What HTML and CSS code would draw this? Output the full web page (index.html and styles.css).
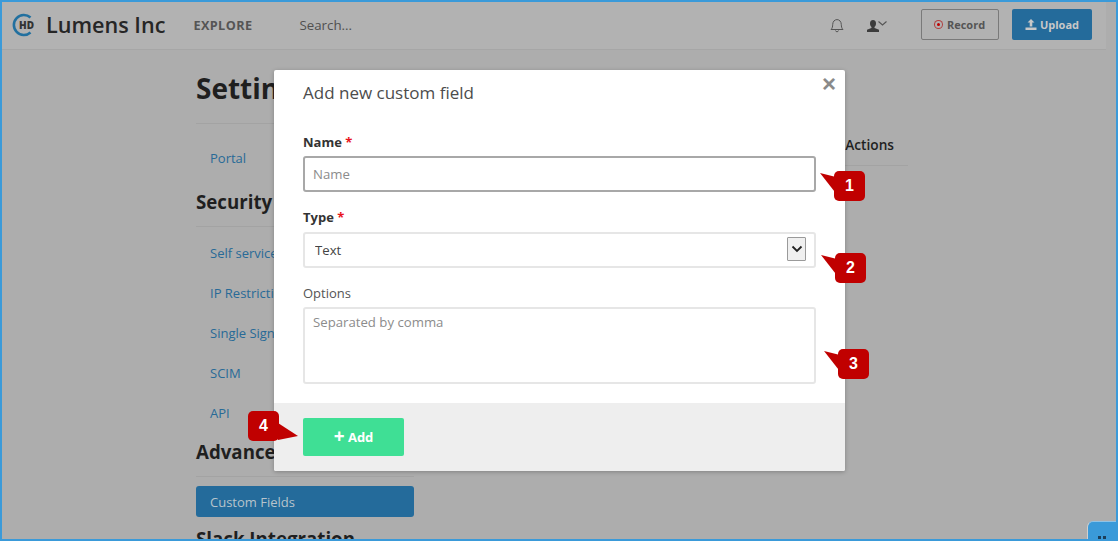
FILE: index.html
```html
<!DOCTYPE html>
<html lang="en">
<head>
    <meta charset="UTF-8">
    <meta name="viewport" content="width=device-width, initial-scale=1.0">
    <title>Settings - Custom Fields</title>
    <link rel="stylesheet" href="styles.css">
</head>
<body>
    <div class="frame">
        <!-- Header content -->
        <header class="topbar">
            <svg class="logo" width="24" height="24" viewBox="0 0 24 24">
                <path d="M19.5 4.5 A10 10 0 1 0 19.5 19.5" fill="none" stroke="#22709f" stroke-width="2.6"/>
                <text x="8" y="16" class="logo-text">HD</text>
            </svg>
            <span class="brand">Lumens Inc</span>
            <a class="explore">EXPLORE</a>
            <span class="search">Search...</span>
            <svg class="bell" width="14" height="15" viewBox="0 0 14 15">
                <path d="M1 11.5 C2.5 10 2.6 8.5 2.7 6.5 C2.8 3.5 4.6 1.6 7 1.6 C9.4 1.6 11.2 3.5 11.3 6.5 C11.4 8.5 11.5 10 13 11.5 Z M5.5 12.5 C5.7 14.2 8.3 14.2 8.5 12.5" fill="none" stroke="#555" stroke-width="1"/>
            </svg>
            <svg class="user" width="20" height="12" viewBox="0 0 20 12">
                <path d="M6 0 C8 0 9 1.5 9 3.4 C9 5 8.2 6.4 7.4 7 L7.6 8 L12 9.8 L12 12 L0 12 L0 9.8 L4.4 8 L4.6 7 C3.8 6.4 3 5 3 3.4 C3 1.5 4 0 6 0 Z" fill="#3c3c3c"/>
                <path d="M11.5 1.5 L15.5 5 L19.5 1.5" fill="none" stroke="#555" stroke-width="1.1"/>
            </svg>
            <button class="btn-record"><span class="record-dot"></span>Record</button>
            <button class="btn-upload">
                <svg width="12" height="11" viewBox="0 0 12 11">
                    <path d="M6 0 L9.5 3.6 L7.3 3.6 L7.3 7.4 L4.7 7.4 L4.7 3.6 L2.5 3.6 Z M0.5 8.4 L11.5 8.4 L11.5 11 L0.5 11 Z" fill="#c8c8c8"/>
                </svg>
                Upload
            </button>
        </header>

        <!-- Page behind the dialog -->
        <div class="page">
            <aside class="sidebar">
                <h2 class="page-title">Settings</h2>
                <ul class="side-list side-list-first">
                    <li>Portal</li>
                </ul>
                <h3 class="side-title side-title-rule title-security">Security</h3>
                <ul class="side-list side-list-security">
                    <li>Self service</li>
                    <li>IP Restrictions</li>
                    <li>Single Sign On</li>
                    <li>SCIM</li>
                    <li>API</li>
                </ul>
                <h3 class="side-title side-title-rule title-advanced">Advanced</h3>
                <div class="side-active">Custom Fields</div>
                <h3 class="side-title side-title-last">Slack Integration</h3>
            </aside>
            <div class="fields-table">
                <div class="fields-head">Actions</div>
            </div>
        </div>

        <div class="chat-tab"><span></span><span></span></div>

        <!-- Add custom field dialog -->
        <section class="modal">
            <div class="modal-body">
                <h4 class="modal-title">Add new custom field</h4>
                <span class="modal-close">&times;</span>

                <label class="field-label field-label-bold">Name <em>*</em></label>
                <input class="field-input field-name" placeholder="Name">

                <label class="field-label field-label-bold label-type">Type <em>*</em></label>
                <div class="select-wrap">
                    <select class="field-input field-select">
                        <option>Text</option>
                    </select>
                    <span class="select-arrow">
                        <svg width="12" height="8" viewBox="0 0 12 8">
                            <path d="M1.5 1.5 L6 6 L10.5 1.5" fill="none" stroke="#222" stroke-width="1.8"/>
                        </svg>
                    </span>
                </div>

                <label class="field-label label-options">Options</label>
                <textarea class="field-input field-options" placeholder="Separated by comma"></textarea>
            </div>
            <div class="modal-footer">
                <button class="btn-add"><span class="plus">+</span> Add</button>
            </div>
        </section>

        <!-- Numbered callouts -->
        <div class="callout callout-1">1</div>
        <div class="callout callout-2">2</div>
        <div class="callout callout-3">3</div>
        <div class="callout callout-4">4</div>
    </div>
</body>
</html>
```

FILE: styles.css
```css
/* Page frame */
html, body {
    margin: 0;
    padding: 0;
}

body {
    font-family: "Open Sans", Arial, sans-serif;
    color: #222;
    background-color: #adadad;
}

.frame {
    position: relative;
    width: 1118px;
    height: 541px;
    box-sizing: border-box;
    border: 2px solid #3a9ad9;
    overflow: hidden;
    background-color: #adadad;
}

/* Header styles */
.topbar {
    display: flex;
    align-items: center;
    width: 1104px;
    height: 48px;
    box-sizing: border-box;
    padding-bottom: 2px;
    background-color: #b2b2b2;
    border-bottom: 1px solid #a6a6a6;
}

.logo {
    margin-left: 9px;
}

.logo-text {
    font-family: "Open Sans", Arial, sans-serif;
    font-size: 10px;
    font-weight: 800;
    fill: #333;
}

.brand {
    margin-left: 11px;
    font-size: 21.6px;
    font-weight: 600;
    color: #262626;
}

.explore {
    margin-left: 28px;
    font-size: 12.7px;
    font-weight: 700;
    letter-spacing: 0.4px;
    color: #555;
}

.search {
    margin-left: 47px;
    font-size: 13.3px;
    color: #505050;
}

.bell {
    margin-left: auto;
    margin-top: 2px;
}

.user {
    margin-left: 23px;
    margin-top: 2px;
}

.btn-record {
    display: flex;
    align-items: center;
    justify-content: center;
    width: 78px;
    height: 31px;
    margin-left: 34px;
    padding: 0;
    font-family: inherit;
    font-size: 11px;
    font-weight: 700;
    color: #555;
    background: none;
    border: 1px solid #7a7a7a;
    border-radius: 2px;
}

.record-dot {
    width: 3px;
    height: 3px;
    margin-right: 5px;
    background-color: #c00000;
    border: 2px solid #b2b2b2;
    border-radius: 50%;
    box-shadow: 0 0 0 1px #b04040;
}

.btn-upload {
    display: flex;
    align-items: center;
    justify-content: center;
    gap: 3px;
    width: 80px;
    height: 31px;
    margin-left: 13px;
    margin-right: 14px;
    padding: 0;
    font-family: inherit;
    font-size: 11px;
    font-weight: 700;
    color: #c8c8c8;
    background-color: #246b9b;
    border: none;
    border-radius: 2px;
}

/* Page behind the dialog */
.page {
    display: flex;
    padding-left: 194px;
}

.sidebar {
    width: 218px;
    flex-shrink: 0;
}

.page-title {
    margin: 20px 0 0;
    padding-bottom: 17px;
    font-size: 28px;
    line-height: 36px;
    font-weight: 700;
    color: #1f1f1f;
    border-bottom: 1px solid #a3a3a3;
}

.side-list {
    list-style-type: none;
    margin: 0;
    padding: 0 0 0 14px;
    font-size: 13px;
    color: #286a97;
}

.side-list li {
    height: 40px;
    line-height: 40px;
    white-space: nowrap;
}

.side-list-first {
    margin-top: 14px;
}

.side-list-security {
    margin-top: 6px;
}

.side-title {
    margin: 0;
    font-size: 18.7px;
    line-height: 28px;
    font-weight: 700;
    color: #1f1f1f;
    white-space: nowrap;
}

.side-title-rule {
    padding-bottom: 10px;
    border-bottom: 1px solid #a3a3a3;
}

.title-security {
    margin-top: 10px;
}

.title-advanced {
    margin-top: 5px;
}

.side-active {
    height: 31px;
    margin-top: 9px;
    padding-left: 14px;
    font-size: 13px;
    line-height: 32px;
    color: #b8c4cc;
    background-color: #246b9b;
    border-radius: 3px;
}

.side-title-last {
    margin-top: 8px;
}

.fields-table {
    width: 480px;
    margin-top: 81px;
    margin-left: 14px;
}

.fields-head {
    height: 34px;
    padding-right: 14px;
    font-size: 13.7px;
    font-weight: 600;
    line-height: 28px;
    text-align: right;
    color: #1f1f1f;
    border-bottom: 1px solid #a3a3a3;
}

/* Chat tab in the corner */
.chat-tab {
    position: absolute;
    right: 0;
    bottom: 0;
    display: flex;
    align-items: flex-end;
    justify-content: center;
    gap: 2px;
    width: 28px;
    height: 17px;
    background-color: #3a9ad9;
    border-top: 1px solid #8fc3e6;
    border-left: 1px solid #d0d0d0;
    border-top-left-radius: 6px;
}

.chat-tab span {
    width: 3px;
    height: 3px;
    background-color: #1c3f5a;
}

/* Dialog */
.modal {
    position: absolute;
    left: 272px;
    top: 68px;
    width: 571px;
    height: 401px;
    background-color: #fff;
    border-radius: 2px;
    box-shadow: 0 1px 4px rgba(0, 0, 0, 0.25);
}

.modal-body {
    position: relative;
    height: 333px;
    padding-left: 29px;
    box-sizing: border-box;
}

.modal-title {
    margin: 0;
    padding-top: 11px;
    font-size: 17px;
    line-height: 24px;
    font-weight: 400;
    color: #4c4c4c;
}

.modal-close {
    position: absolute;
    right: 9px;
    top: 2px;
    font-family: "Liberation Sans", Arial, sans-serif;
    font-size: 24px;
    line-height: 24px;
    font-weight: 700;
    color: #8a8a8a;
}

.field-label {
    display: block;
    font-size: 13px;
    line-height: 18px;
    color: #555;
}

.field-label-bold {
    margin-top: 28px;
    font-weight: 700;
    color: #333;
}

.field-label em {
    font-style: normal;
    color: #e8141c;
}

.label-type {
    margin-top: 16px;
}

.label-options {
    margin-top: 16px;
}

.field-input {
    display: block;
    width: 513px;
    box-sizing: border-box;
    margin: 6px 0 0;
    padding: 0 0 0 8px;
    font-family: inherit;
    font-size: 13.2px;
    color: #444;
    background-color: #fff;
    border: 2px solid #e6e6e6;
    border-radius: 3px;
    outline: none;
}

.field-input::placeholder {
    color: #8c8c8c;
    opacity: 1;
}

.field-name {
    height: 36px;
    margin-top: 5px;
    border-color: #a8a8a8;
}

.select-wrap {
    position: relative;
    width: 513px;
}

.field-select {
    height: 36px;
    padding-left: 10px;
    padding-bottom: 1px;
    appearance: none;
}

.select-arrow {
    position: absolute;
    right: 10px;
    top: 5px;
    display: flex;
    align-items: center;
    justify-content: center;
    width: 17px;
    height: 22px;
    background-color: #f0f0f0;
    border: 1px solid #9a9a9a;
    border-radius: 1px;
}

.field-options {
    height: 77px;
    margin-top: 5px;
    padding-top: 4px;
    resize: none;
}

.modal-footer {
    height: 68px;
    padding: 15px 0 0 29px;
    box-sizing: border-box;
    background-color: #eee;
    border-bottom-left-radius: 2px;
    border-bottom-right-radius: 2px;
}

.btn-add {
    width: 101px;
    height: 38px;
    padding: 0;
    font-family: inherit;
    font-size: 13px;
    font-weight: 700;
    color: #fff;
    background-color: #3fdf95;
    border: none;
    border-radius: 2px;
}

.plus {
    font-size: 19px;
    line-height: 12px;
    vertical-align: -1px;
}

/* Numbered callouts */
.callout {
    position: absolute;
    width: 31px;
    height: 30px;
    font-family: "Liberation Sans", Arial, sans-serif;
    font-size: 16px;
    font-weight: 700;
    line-height: 30px;
    text-align: center;
    color: #fff;
    background-color: #c00000;
    border-radius: 5px;
}

.callout::before {
    content: "";
    position: absolute;
    left: -14px;
    top: 2px;
    width: 22px;
    height: 24px;
    background-color: #c00000;
    clip-path: polygon(0 0, 16px 4px, 18px 23px);
}

.callout-1 {
    left: 832px;
    top: 169px;
}

.callout-2 {
    left: 833px;
    top: 251px;
}

.callout-3 {
    left: 836px;
    top: 347px;
}

.callout-4 {
    left: 246px;
    top: 409px;
}

.callout-4::before {
    left: 24px;
    top: 6px;
    width: 26px;
    height: 24px;
    clip-path: polygon(26px 19px, 6px 6px, 6px 23px);
}
```
